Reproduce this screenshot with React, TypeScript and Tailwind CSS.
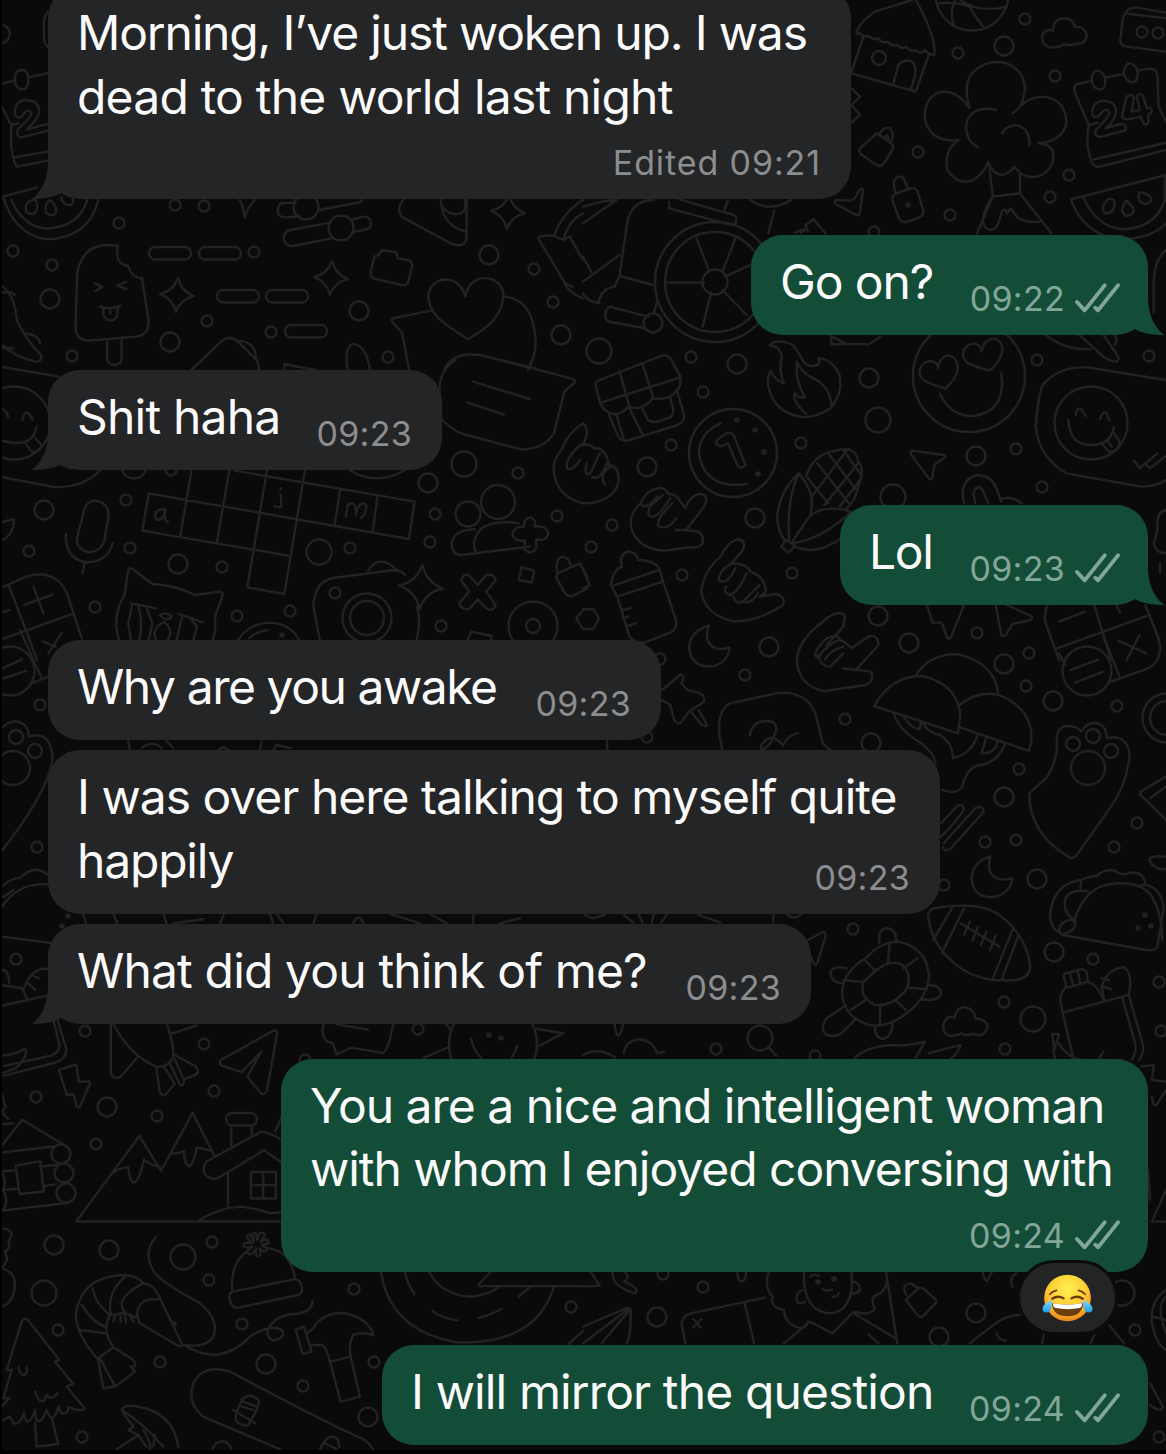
type Patch = { at: string; d: string[] };

// wallpaper line art, drawn patch by patch; each patch has its own origin and scale
const patches: Patch[] = [
  {
    at: "translate(0 0) scale(.3718 .3333)",
    d: [
      "M0 252 L38 242 M75 232 L128 220 M0 310 L30 375 V440 Q35 480 45 500 L128 482 M30 375 L50 370 M38 472 L128 455",
      "M58 210 q18 0 18 28 q0 30 -14 30 q-22 0 -22 -30 q0 -28 18 -28Z",
      "M40 345 Q38 300 72 300 Q107 303 105 338 Q100 360 72 388 L128 372 M40 345 Q50 362 62 345 Q72 322 85 338 Q85 350 50 385 Q40 410 58 412 L128 392",
      "M128 35 q-12 15-10 60 q0 40 10 45 M10 75 Q28 85 26 105 Q22 125 6 130",
      "M8 590 L100 562 M8 590 Q40 705 125 718 Q240 715 265 598 M30 598 Q60 680 125 686 Q215 680 235 598",
      "M95 598 q-30 5-25 35 q10 15 25 5 q10-20 0-40Z M135 600 q-20 15-10 40 q15 12 25 0 q5-20-15-40Z M165 590 q0 25 25 25 q10-5 5-20",
      "M318 738 Q240 722 215 790 Q207 810 207 840 L203 985 Q205 1020 240 1022 L365 1010 Q400 1005 400 965 L382 835 Q355 835 345 798 Q305 790 318 738Z",
      "M288 1022 V1075 Q290 1095 307 1095 Q327 1095 327 1075 V1016 M255 850 L275 860 L257 873 M340 845 L315 857 L340 867 M268 920 Q297 930 325 917 M278 924 V945 Q283 962 298 962 Q315 960 316 940 V922 M297 925 V940",
      "M645 600 Q655 620 658 652 Q665 625 685 600",
      "M975 600 Q970 606 962 608 L858 630 M795 608 L755 610 Q742 625 750 645 Q760 658 805 648",
      "M780 690 L888 668 M945 660 L975 650 Q995 648 998 668 Q998 685 985 688 L945 697 M890 715 L790 738 Q765 740 763 712 Q765 694 780 690",
      "M1085 600 Q1065 625 1080 650 L1215 732 Q1250 745 1255 715 V600 M1185 600 Q1190 680 1255 695 M1190 620 Q1210 650 1240 640 Q1258 625 1250 600",
      "M1007 770 L1018 765 L1028 750 L1065 757 L1070 775 L1095 780 Q1110 782 1108 800 L1098 845 Q1095 858 1080 855 L1005 835 Q995 830 997 815Z",
      "M1258 1018 C1210 980 1150 950 1152 885 C1160 825 1235 820 1252 890 C1262 815 1345 820 1354 880 C1354 950 1310 985 1258 1018Z",
      "M1160 932 L1065 953 Q1050 955 1055 965 L1082 1000 L1100 1110 M1355 890 Q1430 895 1440 1010 Q1445 1060 1420 1110 M1195 1110 Q1215 1055 1290 1065 L1440 1105",
      "M515 1110 L600 1020 Q620 1005 640 1025 L690 1080 Q697 1095 697 1110 M645 1022 Q690 1030 688 1075",
      "M765 1110 V1093 L850 1110 M935 1110 Q925 1040 950 1032 Q985 1035 995 1110",
      "M0 855 Q40 880 45 960 Q70 1020 110 1065 Q115 1085 95 1085 Q40 1070 0 1030 M0 880 Q30 870 40 885 M65 1000 Q105 1005 108 1030 M0 1045 H35",
      "M1490 710 Q1510 640 1568 600 M1515 720 Q1530 660 1568 640 M1450 720 Q1440 705 1490 707 L1515 720 L1535 708 M1450 720 L1520 850 L1540 860 M1535 715 L1568 780 M1520 855 Q1540 885 1568 895",
    ],
  },
  {
    at: "translate(583 0) scale(.3718 .3333)",
    d: [
      "M755 108 L720 222 M715 218 L895 275 L930 165 M835 250 L848 195 Q865 175 885 185 Q900 200 890 240 L882 268 M895 0 Q950 110 945 165 Q930 165 920 150 Q905 165 895 150 Q880 158 870 140 Q855 150 845 135 Q830 140 820 125 Q805 132 795 115 Q780 122 770 108 Q750 112 745 98 Q735 108 735 95 Q750 60 785 35 L885 0",
      "M998 80 Q985 40 1000 0 M1080 85 Q1060 60 1040 20 Q1010 5 955 10 M1015 0 Q1060 40 1140 20",
      "M1250 140 Q1230 130 1237 100 Q1250 85 1265 92 Q1265 55 1293 55 Q1320 55 1322 80 Q1350 80 1355 105 Q1350 135 1330 130 Q1305 140 1295 132 Q1275 148 1250 140Z",
      "M1568 38 L1490 23 Q1460 20 1452 55 L1445 120 Q1445 138 1465 140 L1568 155 M1458 40 L1568 55",
      "M1040 325 Q1020 250 1050 215 Q1090 175 1140 190 Q1200 220 1185 290 Q1180 325 1155 340 M1040 325 Q1000 260 950 280 Q910 310 922 370 Q945 430 1010 420 Q970 450 980 510 Q1010 560 1050 540 Q1080 520 1090 485 Q1100 520 1125 525 Q1150 520 1160 500 Q1190 545 1235 525 Q1275 495 1262 450 Q1250 430 1225 430 Q1290 425 1300 370 Q1300 300 1240 290 Q1200 290 1175 320",
      "M1110 330 Q1050 315 1032 365 Q1025 420 1062 442 M1127 400 Q1140 370 1175 378 Q1205 395 1200 437 M1092 490 L1102 590 L1060 700 M1175 520 V580 L1260 700 M1102 590 L1175 580 M1102 590 Q1060 660 1085 685 Q1110 700 1120 660 Q1130 610 1140 640 L1150 625 L1160 640 Q1175 670 1230 665",
      "M722 265 L745 290 L722 315 L745 345 L722 368",
      "M790 400 L745 445 Q740 455 750 465 L790 495 Q800 502 808 492 L832 450 Q838 440 828 430Z M797 405 Q805 380 825 385 Q840 400 828 428 M813 412 Q820 398 822 418",
      "M845 580 Q830 585 832 600 L850 655 Q855 668 870 666 L905 652 Q918 645 915 630 L900 575 Q895 562 880 565Z M840 578 L835 548 Q845 520 862 535 L875 568",
      "M680 600 Q672 610 685 615 L735 645 Q745 648 745 635 L753 570 Q750 562 742 572 Q730 605 715 602Z",
      "M585 700 L600 685 L605 695 L598 675 L620 658 L652 700 M570 698 L590 690",
      "M1370 242 L1330 252 Q1318 258 1322 275 L1360 375 Q1350 440 1370 490 Q1375 502 1390 500 L1568 450 M1408 232 L1455 222 M1490 212 L1525 206 Q1545 208 1545 230 L1548 320 L1568 365 M1360 375 L1385 368 M1375 478 L1568 428",
      "M1385 212 q18 5 20 30 q0 28-15 27 q-22-5-22-32 q2-25 17-25Z M1472 190 q18 5 20 30 q0 28-15 27 q-22-5-22-32 q2-25 17-25Z",
      "M1370 345 Q1368 305 1400 302 Q1440 305 1432 345 Q1425 370 1405 385 L1445 372 Q1465 372 1458 392 L1395 410 Q1375 412 1378 392 Q1420 345 1415 335 Q1405 320 1390 345 Q1378 358 1370 345Z M1462 290 L1450 345 Q1450 360 1465 358 L1500 350 L1508 372 Q1525 380 1520 345 Q1538 335 1525 322 L1517 325 L1505 285 Q1490 275 1490 295 L1498 330 L1475 335 L1482 295 Q1478 278 1462 290Z",
      "M1312 598 L1568 525 M1312 598 Q1350 710 1450 718 Q1530 715 1568 670 M1345 590 Q1380 680 1450 688 Q1540 685 1565 600 V530 M1410 600 Q1390 625 1405 640 Q1435 640 1428 600 Q1418 592 1410 600 M1462 602 Q1440 630 1460 648 Q1485 645 1480 625Z M1495 578 Q1490 610 1515 612 Q1535 605 1525 590 Q1510 575 1495 578",
      "M305 715 L340 815 M375 815 L410 715 M382 830 L460 790 M325 848 H225 M345 877 L322 980 M375 870 L440 945",
      "M232 605 V625 L400 675 Q415 675 412 650 L405 645 L260 598 M120 660 Q135 600 190 600 M120 660 L98 828 L190 855 M98 828 L85 860 Q50 865 42 905 M0 845 L98 765 M0 770 L22 815 M0 880 Q10 905 45 910 M80 922 L175 950 M62 930 Q55 960 70 965 L165 985 M75 920 Q65 922 62 935 M200 900 L190 940 M515 630 L498 700 M450 600 Q500 640 560 600 M380 630 L390 600 M0 620 Q60 600 90 600 L0 670",
      "M1568 750 Q1535 780 1535 850 V940 M668 1005 V1033 L770 1032 L800 1010 M670 1010 L710 1032",
    ],
  },
  {
    at: "translate(0 360) scale(.3718 .3333)",
    d: [
      "M0 20 L160 50 M0 350 L150 382 Q230 380 270 330 M0 145 Q18 150 22 170 M60 180 Q70 135 88 180 M0 240 Q90 270 98 200 M65 245 L85 275 Q105 280 112 255 L95 235",
      "M222 470 Q228 420 258 422 Q295 430 292 470 L280 545 Q270 575 240 577 Q205 570 207 535Z M177 522 Q175 600 235 607 Q290 605 303 550 M228 610 L222 640",
      "M0 490 Q20 480 37 478 Q40 520 5 542",
      "M630 332 L1115 425 L1100 537 L400 400 L383 512 L780 588 M515 332 L485 527 M617 332 L583 548 M718 332 L665 682 L765 702 L820 332 M915 388 L900 495 M1015 408 L1003 515",
      "M443 448 Q418 445 417 470 Q425 490 440 468 L445 448 Q438 480 452 487 M755 405 L757 438 Q752 446 738 438 M755 385 V388 M930 470 L935 435 Q955 420 957 450 V465 Q965 420 985 435 Q987 460 970 475",
      "M1225 0 Q1180 30 1182 100 M1190 180 Q1215 210 1245 222 L1400 268 Q1460 270 1490 220 L1518 95 L1545 68 Q1550 60 1535 55 L1345 0 M1272 65 L1425 117 M1257 128 L1355 163 M1430 0 L1425 15",
      "M1395 490 Q1330 478 1295 505 Q1265 540 1280 578 M1278 508 Q1220 510 1215 550 Q1215 585 1240 585 L1425 560 M1410 500 V485 Q1425 460 1440 485 L1438 500 Q1470 495 1475 520 Q1470 545 1442 538 V565 Q1425 590 1410 565 L1412 542 Q1380 545 1378 520 Q1385 498 1410 500",
      "M1240 660 Q1250 635 1265 650 L1285 675 L1305 648 Q1325 635 1333 660 L1308 695 L1333 735 Q1325 758 1308 745 L1285 718 L1262 748 Q1240 750 1235 730 L1262 695Z",
      "M1403 622 L1437 632 L1430 668 L1395 660Z M1500 640 Q1490 595 1515 590 Q1530 595 1535 615 M1497 655 Q1495 640 1510 635 L1560 610 L1580 650 M1497 655 L1520 700 Q1530 715 1545 705 L1580 685",
      "M1258 840 L1268 815 L1322 828 V840 M1568 750 L1550 775 L1568 808",
      "M860 840 L843 740 Q845 670 890 655 L1060 630 Q1080 632 1090 645 M1122 740 Q1133 790 1120 840 M990 632 Q1020 580 1065 628",
      "M320 840 Q300 770 335 705 L345 630 Q350 620 360 630 L410 672 Q470 675 525 705 L590 695 Q602 697 598 708 L578 770 Q582 810 572 840 M352 730 L420 745 M355 738 L345 790 L352 840 M372 740 Q385 780 375 840 M395 745 L410 790 L400 840 M430 765 Q445 755 462 768 Q450 790 430 765 M440 785 Q405 810 420 840 M440 785 Q470 810 450 840 M480 762 L545 787 M490 770 L475 840 M515 780 L530 800 L520 840",
      "M640 840 Q670 790 725 788 Q780 790 805 840 M670 835 Q690 815 720 810",
      "M0 685 L70 650 Q150 625 180 700 L220 835 M0 840 L195 762 M25 680 L100 900 M90 680 L117 760 M65 735 L140 705 M115 845 L150 860 M130 880 L165 820 M0 760 L25 750",
      "M940 330 Q1010 380 1090 330 M165 315 L190 325",
      "M1568 190 Q1530 215 1510 270 Q1485 300 1490 340 Q1500 410 1568 430 M1568 250 Q1520 290 1525 325 Q1540 335 1560 300",
    ],
  },
  {
    at: "translate(583 330) scale(.3718 .3333)",
    d: [
      "M975 175 C940 165 905 155 905 125 C910 85 955 85 955 115 C960 65 1005 65 1008 110 C1008 135 990 160 975 175Z M1093 122 C1060 110 1022 105 1022 72 C1025 35 1070 30 1072 65 C1078 15 1125 15 1128 55 C1128 85 1110 105 1093 122Z M960 192 Q990 260 1050 258 Q1140 245 1125 128",
      "M1568 150 L1375 115 Q1290 100 1240 160 Q1225 180 1218 290 Q1225 380 1300 430 L1500 470 Q1540 470 1568 450",
      "M1325 255 Q1330 215 1352 258 M1390 268 Q1405 225 1415 270 M1305 270 Q1310 345 1365 345 Q1420 345 1428 292 M1395 340 L1410 360 Q1425 375 1440 355 L1443 335 L1428 310 M1410 330 L1422 350 M1482 392 L1497 415 L1545 370 M1515 405 L1525 415 L1568 378",
      "M1240 10 Q1290 60 1365 58 M1430 45 Q1440 30 1430 15 M1330 10 L1400 80 Q1445 110 1440 80 L1400 15",
      "M45 150 Q30 155 35 170 L45 215 Q60 260 100 250 Q115 240 122 230 Q160 245 188 205 Q240 215 262 165 V140 L235 85 Q225 72 210 78Z M48 218 L262 142 M98 122 L125 230 M160 102 L190 205 M70 255 L95 320 Q105 335 120 332 L255 285 Q275 275 272 255 L255 190 M125 235 L162 318 M160 238 L175 270 Q185 278 200 275 L235 262 Q245 250 242 235 L235 205 M90 255 L110 330",
      "M503 45 Q520 25 560 42 Q575 55 590 90 Q605 115 630 105 Q640 95 632 85 Q670 85 690 135 Q700 190 665 235 Q620 270 575 258 Q510 240 498 165 Q495 140 505 122 Q515 150 540 160 Q525 120 535 80 Q530 50 503 45Z M600 252 Q560 210 570 190 Q580 205 597 203 Q570 150 575 95 Q590 130 620 145 Q665 170 668 225",
      "M370 280 Q310 310 312 375 Q330 480 442 462 M360 330 Q355 350 375 348 L390 340 L415 405 Q425 420 437 405 L405 315 Q395 300 375 318Z",
      "M600 440 Q620 370 680 362 Q735 345 740 395 Q760 420 740 470 Q735 510 705 540 M580 430 Q530 480 522 560 Q525 610 545 635 M580 430 Q545 520 555 630 M580 430 Q630 490 610 560 M722 545 Q640 520 605 565 L560 640 Q640 630 722 545 M570 650 Q630 680 700 620 M545 628 L533 650 L553 668 L570 648Z M605 445 L660 520 M630 400 L715 520 M660 370 L735 480 M700 360 L745 430 M615 500 L710 360 M650 525 L740 400 M690 530 L745 450",
      "M155 520 Q170 480 200 475 Q220 470 230 492 Q250 490 262 515 L275 535 Q290 490 320 492 Q340 500 325 530 L278 600 L310 605 Q325 615 322 640 Q315 655 290 652 L220 662 Q160 660 135 610 Q115 560 155 520 M155 520 Q165 545 200 500 M185 560 Q170 560 180 530 L215 495 M185 560 Q200 565 235 505 M205 590 Q195 580 215 550 L240 520 M205 590 Q230 600 250 565 M278 600 H250",
      "M415 628 Q440 630 430 660 L400 700 Q440 700 450 725 Q490 740 492 785 L475 800 L520 792 Q545 800 538 825 Q480 870 410 875 Q330 860 318 785 Q325 720 370 680 Q390 635 415 628 M400 700 Q365 720 365 750 Q385 770 410 715 M385 770 Q375 790 395 795 Q415 790 440 730 M405 800 Q410 825 430 815 L475 765 M425 815 Q455 825 470 790",
      "M0 280 Q20 300 0 345 M-5 345 Q20 340 30 355 Q60 350 70 405 Q100 410 95 460 Q75 520 0 520 M10 400 Q0 440 20 430 L45 370 M25 440 Q45 455 65 400 M60 465 Q40 430 75 410",
      "M105 710 Q95 675 120 665 Q145 665 148 690 Q190 690 205 715 L215 755 L92 800 L75 765 Q80 720 105 710 M80 768 L205 720 M92 800 L125 920 Q140 940 165 938 L235 908 Q255 895 250 870 L215 755 M107 840 L128 835 M107 865 L122 860 M115 890 L142 880",
      "M885 362 Q878 365 883 375 L930 445 Q937 452 940 440 L945 405 L970 385 Q978 378 970 375Z",
      "M1025 520 Q1010 450 1060 435 Q1095 435 1110 470 L1125 515 M1055 520 L1050 490 Q1060 460 1075 480 L1090 520 M1125 508 Q1150 495 1180 520",
      "M925 825 L940 878 H965 L980 925 Q990 930 992 915 L1025 825 M1110 825 L1125 915 Q1132 925 1140 910 L1155 882 L1205 870 Q1212 860 1200 855 L1140 825",
      "M1250 825 Q1240 850 1243 875 L1280 990 M1280 875 L1350 845 M1375 825 L1420 990 M1275 955 L1525 855 M1512 825 L1550 930 M1435 825 L1445 850",
      "M575 990 Q580 930 640 880 Q680 835 705 855 L700 890 L655 945 M0 838 H28 L43 865 L28 897 H0 M0 720 L18 765 L0 775",
      "M1568 540 Q1540 545 1545 600 L1535 640 Q1540 670 1568 670 M1552 700 V730",
    ],
  },
  {
    at: "translate(583 620) scale(.3718 .3333)",
    d: [
      "M575 120 Q580 200 650 213 L760 195 Q785 185 775 155 L700 145 M735 148 L795 75 Q795 45 770 48 L722 85 Q700 60 690 60 Q690 40 655 55 Q610 105 632 112 Q660 70 690 60 M632 108 Q640 140 665 140 L700 100 M650 120 Q665 90 700 80",
      "M338 17 C270 40 275 115 315 135 C355 150 390 125 395 82 C340 100 325 60 338 17Z M1095 710 C1030 730 1035 810 1075 828 C1110 840 1150 820 1155 775 C1100 790 1085 755 1095 710Z",
      "M1395 35 L1445 175 M1420 185 L1520 145 Q1560 120 1550 65 L1542 40 M1440 62 L1515 100 M1497 45 L1462 120 M1312 150 L1385 120 M1323 188 L1400 155 M1280 100 L1297 135",
      "M262 165 L212 210 M212 240 L235 255 L245 300 Q255 318 265 305 L285 275 L325 245 Q330 225 310 218 L280 210 L265 190 L270 175 Q268 160 258 165 M290 275 L320 315 Q335 325 332 310 L310 270",
      "M375 390 Q350 280 395 250 L520 220 Q600 210 625 280 L645 370 L665 390 M448 347 Q455 300 500 303 Q530 310 515 345 Q500 385 480 388 Q475 370 500 355 Q520 350 538 377 Q550 345 578 340 M65 362 V390",
      "M783 258 Q830 165 915 168 Q1010 195 1015 290 L1008 340Z M895 168 Q930 100 1010 103 Q1110 130 1117 225 M1010 258 Q1060 210 1120 225 Q1215 270 1205 370 L1200 393 L1015 322 M835 280 Q850 330 910 370 Q945 400 948 430 M860 285 Q880 325 905 328 L910 305 M915 310 Q930 340 960 345 Q995 370 995 415 Q1050 400 1062 340 M1085 350 Q1080 370 1072 400 Q1110 400 1115 365 M1135 372 Q1115 430 1060 437 Q1030 450 1020 500 Q1005 525 965 510",
      "M1275 370 Q1270 315 1310 318 Q1330 320 1340 335 Q1360 300 1390 312 Q1410 325 1408 355 Q1460 340 1470 400 Q1465 490 1420 560 L1325 710 Q1315 718 1305 710 Q1200 640 1200 520 L1245 475 Q1275 430 1275 370",
      "M1568 470 L1500 515 Q1495 522 1505 530 L1568 600 M1525 535 L1568 500 M1568 710 Q1525 705 1523 720 Q1535 750 1568 748",
      "M963 610 L1005 560 Q1020 548 1025 565 Q1020 585 963 650 M970 670 L1055 565 Q1075 555 1078 575 L990 685 Q970 698 968 680",
      "M1285 940 Q1250 920 1258 870 Q1270 790 1340 780 Q1370 765 1380 770 Q1400 745 1430 752 Q1455 770 1470 758 Q1510 755 1512 792 M1500 795 Q1550 790 1562 860 L1545 980 Q1535 995 1515 990 L1290 945 Q1275 940 1285 915 Q1310 890 1320 905 Q1350 800 1420 792 Q1500 780 1530 830 Q1558 880 1558 960 M1340 785 L1338 805 M1320 900 Q1285 870 1300 830 Q1320 805 1360 815 M1325 905 Q1325 935 1290 942",
      "M930 900 Q920 865 960 862 Q1070 845 1120 885 Q1195 950 1203 1040 Q1200 1075 1165 1080 Q1070 1090 1010 1040 Q940 980 930 900 M942 960 L995 860 M965 1000 L1025 865 M1100 1082 L1155 930 M1125 1082 L1170 950 M1015 910 L1120 980 M1040 905 L1025 945 M1062 920 L1048 960 M1085 935 L1070 975 M1110 945 L1095 990",
      "M760 1015 Q800 965 850 965 Q925 985 930 1065 Q930 1130 870 1180 Q820 1225 770 1215 Q695 1190 697 1110 Q705 1050 760 1015 M785 1055 Q825 1015 860 1035 Q890 1070 865 1115 Q830 1160 785 1155 Q740 1130 755 1085Z M825 968 L820 1028 M757 1018 L785 1052 M900 1015 L862 1045 M700 1080 L755 1087 M925 1108 L872 1103 M840 1140 L868 1170 M800 1158 L798 1215 M720 1170 L760 1140",
      "M797 970 V945 Q800 925 820 925 Q845 930 843 968 M700 1090 Q670 1090 665 1060 Q670 1035 710 1045 M928 1095 Q965 1095 962 1125 Q950 1145 912 1138 M785 1218 Q785 1255 808 1257 Q832 1250 833 1205 M708 1155 L655 1195 Q635 1225 655 1245 Q680 1255 700 1235 L735 1195",
      "M985 1247 Q965 1240 970 1210 Q980 1185 1000 1192 Q1005 1160 1030 1162 Q1055 1170 1055 1195 Q1090 1200 1088 1225 Q1075 1255 1050 1242 Q1025 1250 1018 1240 Q1000 1250 985 1247Z",
      "M1300 1100 L1293 1070 Q1290 1060 1305 1058 L1340 1048 Q1352 1048 1355 1060 L1358 1085 L1305 1102Z M1310 1060 L1318 1095 M1330 1052 L1338 1090 M1300 1100 Q1280 1120 1285 1150 L1290 1178 L1468 1125 Q1480 1060 1455 1042 Q1410 1045 1395 1100 L1402 1142 M1358 1085 Q1385 1095 1400 1140 M1290 1178 L1320 1320 M1450 1130 L1485 1270 Q1490 1300 1475 1320 M1468 1125 L1505 1270 Q1510 1300 1495 1320 M1395 1075 L1415 1080 M1400 1100 L1420 1108 M1262 1242 L1268 1290 L1280 1242Z M1265 1290 L1270 1320 M1280 1270 Q1300 1310 1340 1320 M1400 1295 L1385 1320",
      "M605 960 L645 937 Q655 935 652 950 L630 1030 Q625 1038 618 1028 L612 1005 M498 1280 L520 1308",
      "M85 1212 Q88 1245 95 1247 Q103 1240 108 1212 M110 1300 Q115 1260 155 1258 Q190 1265 200 1300 L220 1295 M0 1305 Q40 1280 85 1312 M730 1315 Q760 1280 830 1275 Q870 1280 920 1265 L895 1312 M930 1300 L1015 1275 Q1010 1300 990 1315",
      "M110 885 L135 908 M150 885 L160 908 M185 908 L190 885 M210 908 L225 885 M310 885 L370 908 M512 885 V908 M5 885 L25 895 L60 885",
    ],
  },
  {
    at: "translate(0 640) scale(.3333 .3333)",
    d: [
      "M8 85 L65 58 M10 115 L78 93 M60 -30 L125 115 M95 130 L145 110",
      "M0 270 Q25 240 55 245 Q85 255 88 290 Q150 270 158 350 Q150 450 0 640",
      "M5 740 Q40 710 60 715 Q100 670 145 705 M0 810 Q50 725 145 733 M0 775 Q15 770 40 750 M5 890 L160 910",
      "M385 303 L390 330 M425 325 Q455 298 485 325 M500 303 L520 325 M655 330 Q670 315 685 330 M785 303 L780 330 M820 330 L830 315 L875 325",
      "M250 822 L258 850 M340 822 L352 850 M490 822 L500 850 M520 850 L610 838 M660 850 L672 822 M810 822 L820 850 M830 822 L850 848",
      "M940 850 L950 822 M1060 850 Q1075 815 1090 850 M1170 822 L1260 850 M1290 822 L1340 850 M1420 822 V850 M1500 850 L1560 835",
    ],
  },
  {
    at: "translate(0 900) scale(.3718 .3533)",
    d: [
      "M0 300 L130 270 M5 200 Q20 190 25 235 M0 240 L60 250 L75 285 M65 250 Q85 190 128 195 M90 215 L105 222 M75 235 L95 255",
      "M155 340 L178 420 Q180 450 150 460 L0 500 M145 345 L160 410 Q160 430 140 440 L10 470 M5 440 Q40 440 65 422 Q80 430 50 470 Q20 490 0 490",
      "M160 487 Q155 480 165 478 L200 467 Q207 467 207 475 L212 515 L240 513 Q245 520 238 528 L215 585 Q208 592 205 580 L198 550 L180 552Z",
      "M298 350 V490 Q305 510 325 500 L372 442 M305 352 Q350 440 420 472 Q455 475 465 445 Q470 420 450 352 M460 378 L530 355 M420 472 L430 545 Q440 560 450 545 L470 520 L440 470 M455 458 L485 525 Q495 525 495 510 L470 450 M472 440 L525 470 Q540 485 525 495 L495 508",
      "M595 452 L735 370 Q747 367 745 380 L718 540 Q710 555 700 545 L665 500 L702 430 L650 487 L595 468 Q588 460 595 452Z",
      "M870 352 Q860 400 895 405 L905 437 L945 418 L1030 433 Q1045 425 1057 352 M905 352 L990 367",
      "M1267 392 Q1275 430 1295 447 M1390 413 Q1385 435 1375 447 M1200 352 L1215 372 M1445 365 L1515 377 L1450 413 M1140 447 L1205 417",
      "M0 715 L150 697 M5 695 L60 622 L170 692 M0 635 L35 632 M5 768 L40 765 M108 755 L150 750 M0 822 L48 817 M118 810 L150 805 M0 880 L185 857 M42 752 L108 740 L118 825 L52 832Z M5 770 Q20 800 8 820 M10 825 Q25 855 8 878 M5 550 L15 585 L5 600 L22 620",
      "M757 910 H205 L375 668 L433 767 L518 602 L577 725 M300 775 Q325 755 345 757 Q348 795 360 800 Q375 795 387 735 Q410 755 430 755 M465 718 Q490 715 495 710 Q495 750 510 755 Q520 745 530 700 Q550 705 570 710 M535 907 Q590 870 650 868 Q700 875 725 887 L757 884",
      "M555 740 L700 657 Q715 652 757 678 M555 740 Q540 765 555 780 Q570 795 590 785 L710 708 L757 742 M613 775 V868 M622 695 V645 M677 645 V662 M740 655 L757 615 M675 770 H742 V845 H675Z M708 770 V845 M675 807 H742",
      "M1025 1055 Q1050 1220 1230 1252 Q1440 1260 1490 1095 M1090 1055 Q1095 1085 1115 1115 M1155 1055 Q1190 1120 1270 1123 Q1320 1115 1338 1098 M1163 1163 Q1190 1185 1230 1190 M1287 1183 Q1320 1175 1350 1157 M1395 1123 L1422 1098 M1318 1055 L1287 1088 Q1285 1095 1300 1093 H1568 M1530 1256 L1568 1220",
    ],
  },
  {
    at: "translate(0 1180) scale(.3333 .3333)",
    d: [
      "M0 145 Q35 145 35 165 L25 185 Q35 205 15 215 L22 240 L5 265 Q45 275 45 315 Q40 370 5 380",
      "M20 570 L65 425 Q75 408 88 425 L178 540 L165 545 L220 612 L200 620 L250 680 Q260 692 240 690 Q220 690 205 680 Q205 705 185 700 Q175 680 175 680 Q165 720 150 712 Q145 700 140 690 Q125 730 110 722 Q105 705 105 690 Q95 725 80 725 Q72 710 72 700 Q60 735 40 730 Q35 715 30 710 L0 725 M20 570 L35 570 L10 655 L28 655 L5 680 M55 560 Q60 590 75 583 Q85 575 80 562 M105 635 Q115 665 130 665 Q140 650 140 645 Q155 665 172 640 M105 730 L110 800 L175 792 L155 715",
      "M310 625 L295 540 Q225 460 228 400 Q240 320 310 295 Q400 270 430 310 Q460 312 475 345 L545 490 Q550 500 535 498 L420 430 Q400 390 430 365 Q450 355 475 358 M430 310 Q370 340 365 370 Q365 400 390 405 Q400 412 415 412 M375 290 Q330 330 330 380 Q330 410 345 405 Q365 395 390 405 M278 325 Q285 370 330 405 M245 375 Q280 430 320 442 M240 450 L320 460 M330 405 Q310 440 325 475 L340 502 L295 535 M340 502 L400 540 Q408 550 405 558 L392 560 L405 575 L345 620 L310 625 M300 535 L345 618 M345 410 L340 425 M362 408 V425 M375 408 L378 428 M390 408 L400 425",
      "M467 172 Q425 220 465 280 Q490 310 600 370 Q660 420 640 470 Q620 505 550 495 Q600 525 650 525 Q710 515 750 470 Q810 430 845 450 Q860 475 820 482 Q795 470 805 445 Q830 405 880 402 Q935 400 938 362",
      "M697 330 Q690 250 740 215 M805 205 Q870 210 885 295 M697 335 L880 298 Q900 295 905 320 Q910 340 895 345 L715 383 Q695 385 690 360 Q685 340 697 335",
      "M762 185 L750 162 Q738 165 745 178 L755 190 L735 188 Q725 200 740 203 L757 200 L742 215 Q745 228 758 220 L768 205 V225 Q778 235 782 222 L778 205 L792 215 Q805 210 798 202 L785 195 L805 190 Q808 178 795 178 L782 185 L795 165 Q788 152 778 162 L772 180 L768 160 Q758 155 760 168Z",
      "M887 450 L912 440 L935 515 L908 522Z M920 460 Q940 450 945 435 Q990 385 1055 405 Q1110 425 1120 465 Q1085 455 1060 465 Q1045 490 1052 530 L990 545 Q980 500 965 495 L930 495 M990 545 L1022 665 L1080 650 L1052 530",
      "M840 808 L610 710 Q560 670 580 610 Q610 550 690 575 Q1000 740 1085 775 Q1110 790 1120 810 M725 660 Q750 635 775 660 Q780 670 765 700 L745 735 Q735 742 710 725 Q700 715 725 660 M700 690 L765 730 M725 680 L760 690 M730 665 L770 680 M960 810 Q985 750 1015 780 L1018 800 M975 790 L1010 808",
      "M365 690 Q370 675 405 678 Q520 695 535 800 M365 690 Q430 730 490 800 M370 700 L400 740 L385 750 L415 765 L350 808 M415 765 Q430 790 440 800 M430 750 Q455 790 450 808 M465 765 L460 800",
    ],
  },
  {
    at: "translate(583 1000) scale(.3718 .3333)",
    d: [
      "M0 860 L45 857 L20 815 M80 815 Q75 860 140 880 Q155 865 110 845 Q130 830 110 815 M415 815 Q415 845 427 845 Q440 840 438 815",
      "M0 980 L115 925 Q130 922 128 935 Q130 1000 118 1030 M0 1030 L125 925 M50 1030 L125 930",
      "M275 1030 L265 970 Q270 945 290 940 L490 893 M435 910 L460 1030 M297 957 L317 983 M318 957 L297 983",
      "M500 815 Q485 860 510 890 Q500 920 540 930 Q545 980 590 985 Q605 975 605 965 M595 815 Q590 890 625 925 Q665 955 700 925 Q730 890 722 815 M590 870 Q570 880 575 905 Q585 915 597 905 M722 845 Q745 845 745 870 Q735 885 720 878 M730 935 Q770 950 785 925 Q770 890 790 885 Q825 870 815 815 L845 1030 M540 1030 L610 965 L670 1000 L725 938 L840 1015 M768 1003 L795 1030 M612 830 Q620 820 635 828 M645 868 Q655 875 670 868 M672 890 Q685 890 688 880",
      "M905 862 L868 900 L900 945 Q908 955 915 948 L948 910 Q952 900 945 895 L915 865Z M870 885 Q855 855 878 850 Q895 855 900 868",
      "M1040 1030 L1110 970 Q1140 945 1175 945 M1113 1000 Q1120 1025 1137 1020 M1235 1030 L1240 1000 M1365 1030 L1375 1005 M1415 975 L1455 1030 M1155 860 Q1145 835 1165 820 M1075 815 Q1080 845 1087 842 L1100 815",
      "M1568 870 Q1525 900 1530 970 Q1540 1030 1568 1050 M1568 890 Q1540 920 1568 1000 M1532 950 L1568 960",
      "M1500 200 L1535 195 L1530 240 L1568 245 M1530 290 Q1535 330 1545 310 L1568 270 M1568 570 L1530 665 H1568 M1520 510 L1525 600 M1525 1150 L1560 1220 Q1555 1240 1525 1215",
    ],
  },
];

const rings: Record<string, number[][]> = {
  "5.5": [
    [175, 205], [204, 206], [119, 223], [13, 251], [52, 265], [254, 252], [207, 321], [72, 356], [271, 332], [534, 269],
    [553, 302], [388, 357], [1025, 19], [958, 53], [1055, 76], [918, 152], [1069, 175], [1050, 197], [950, 215], [874, 232],
    [1142, 32], [1158, 33], [691, 357], [1037, 360], [1149, 356], [703, 392], [671, 445], [801, 443], [1016, 449], [1042, 487],
    [612, 525], [591, 547], [682, 575], [792, 573], [977, 633], [1029, 653], [126, 500], [29, 551], [130, 548], [222, 567],
    [95, 607], [237, 616], [290, 611], [350, 548], [518, 473], [435, 514], [430, 542], [557, 516], [441, 626], [171, 470],
    [745, 675], [845, 719], [1026, 686], [1117, 706], [1019, 769], [1137, 823], [1114, 847], [1016, 840], [985, 842], [944, 885],
    [853, 929], [1093, 959], [1159, 982], [1004, 1002], [1161, 1031], [1005, 1049], [716, 1049], [815, 1056], [647, 737], [660, 659],
    [16, 959], [85, 1031], [204, 1044], [214, 1091], [36, 1097], [157, 1116], [96, 1144], [418, 1029], [305, 1060], [212, 1242],
    [209, 1280], [58, 1330], [242, 1324], [160, 1362], [303, 1386], [374, 1362], [82, 1437], [354, 1289], [571, 1307], [703, 1287],
    [663, 1274], [1135, 1330], [1159, 1437], [40, 705], [37, 847], [335, 593],
  ],
  "7": [[1073, 744], [1093, 736], [1111, 751], [16, 737], [35, 751], [533, 626], [879, 58]],
  "9.5": [
    [50, 299], [170, 342], [359, 311], [489, 255], [561, 335], [1004, 46], [737, 364], [869, 378], [647, 467], [976, 456],
    [755, 518], [878, 616], [909, 643], [769, 647], [44, 510], [178, 564], [428, 483], [871, 743], [1004, 664], [1053, 701],
    [1004, 797], [1037, 879], [1054, 952], [794, 908], [107, 1107], [54, 1245], [109, 1250], [266, 1364], [368, 1417], [222, 1451],
    [657, 1317], [976, 1313], [939, 1337], [61, 1154], [64, 1173], [66, 1193], [653, 323],
  ],
  "12.5": [
    [599, 351], [878, 420], [893, 497], [319, 552], [464, 464], [134, 466], [1033, 1019], [183, 1257], [44, 1293], [1122, 1293],
    [306, 207], [341, 228], [468, 514], [760, 1038], [715, 282],
  ],
  "17": [[498, 502], [367, 618], [1088, 768], [13, 768], [1167, 718]],
  "24.5": [[533, 626], [367, 618], [1087, 671], [10, 671], [1167, 718]],
  "36.5": [[972, -6], [1091, 423], [14, 423]],
  "44": [[733, 453], [493, 1044]],
  "50": [[715, 282]],
  "56": [[969, 376]],
  "60": [[715, 282]],
};

const dots = [
  [908, 205], [737, 420], [755, 430], [764, 452], [758, 474], [1145, 915], [1151, 926], [1138, 928], [68, 916], [62, 926],
  [282, 635], [489, 1035], [501, 1038], [174, 1324], [818, 1282], [834, 1279],
];

const pills = [
  [149, 247, 42], [199, 247, 42], [217, 290, 42], [266, 290, 42], [285, 325, 42], [226, 1113, 31],
];

const stars = [
  [331, 278, 17], [177, 295, 17], [508, 212, 17], [421, 587, 22],
];

function Wallpaper() {
  return (
    <svg
      className="absolute inset-0 [&_path]:[vector-effect:non-scaling-stroke]"
      width="1166"
      height="1450"
      viewBox="0 0 1166 1450"
      fill="none"
      stroke="#222222"
      strokeWidth="2.4"
      strokeLinecap="round"
      strokeLinejoin="round"
      aria-hidden="true"
    >
      {patches.map((patch) => (
        <g key={patch.at} transform={patch.at}>
          {patch.d.map((d) => (
            <path key={d} d={d} />
          ))}
        </g>
      ))}
      {Object.entries(rings).map(([r, list]) =>
        list.map(([x, y]) => <circle key={`${r}-${x}-${y}`} cx={x} cy={y} r={r} />)
      )}
      {dots.map(([x, y]) => (
        <circle key={`${x}-${y}`} cx={x} cy={y} r="1.6" />
      ))}
      {pills.map(([x, y, w]) => (
        <rect key={`${x}-${y}`} x={x} y={y} width={w} height="12.5" rx="6" />
      ))}
      {stars.map(([x, y, s]) => (
        <path
          key={`${x}-${y}`}
          transform={`translate(${x} ${y}) rotate(4) scale(${s})`}
          d="M0 -1 Q.2 -.25 1 0 Q.25 .2 0 1 Q-.2 .25 -1 0 Q-.25 -.2 0 -1Z"
        />
      ))}
      <path d="M1 0 V1450" stroke="#000" strokeWidth="2" />
    </svg>
  );
}

function Ticks() {
  return (
    <svg
      className="mb-[6px] ml-[10px] h-[30px] w-[45px]"
      viewBox="0 0 135 90"
      fill="none"
      stroke="#82a698"
      strokeWidth="11.5"
      strokeLinecap="round"
      strokeLinejoin="round"
      aria-label="Delivered"
    >
      <path d="M6 57 L29 82 L89 7" />
      <path d="M61 74 L69 82 L129 7" />
    </svg>
  );
}

function Tail({ mine }: { mine?: boolean }) {
  return (
    <svg
      className={
        mine
          ? "absolute bottom-0 right-[-16px] h-[50px] w-[50px] text-[#144d37]"
          : "absolute bottom-0 left-[-16px] h-[50px] w-[50px] -scale-x-100 text-[#242527]"
      }
      viewBox="0 0 50 50"
      fill="currentColor"
      aria-hidden="true"
    >
      <path d="M34 12 C34 28 39 41 50 50 C40 50 28 48.500 20 43.500 L8 28 Z" />
    </svg>
  );
}

function Joy() {
  return (
    <svg className="h-[48px] w-[51px]" viewBox="0 0 152 144" role="img" aria-label="😂">
      <defs>
        <radialGradient id="face" cx=".5" cy=".3" r=".72">
          <stop offset="0" stopColor="#fff04f" />
          <stop offset=".5" stopColor="#fdd037" />
          <stop offset=".8" stopColor="#f8a825" />
          <stop offset="1" stopColor="#e87a1c" />
        </radialGradient>
        <linearGradient id="tear" x1="0" y1="0" x2="0" y2="1">
          <stop offset="0" stopColor="#8fe0fb" />
          <stop offset="1" stopColor="#199be6" />
        </linearGradient>
      </defs>
      <circle cx="76" cy="72" r="70" fill="url(#face)" />
      <g fill="none" stroke="#6d3c10" strokeWidth="5" strokeLinecap="round">
        <path d="M23 61 Q30 52 43 49" />
        <path d="M129 61 Q122 52 109 49" />
        <path d="M30 74 Q47 63 64 73" strokeWidth="7" />
        <path d="M122 74 Q105 63 88 73" strokeWidth="7" />
      </g>
      <path d="M29 88 Q76 96 123 88 Q120 127 76 127 Q32 127 29 88Z" fill="#6b3d0f" />
      <path d="M32 88 Q76 96 120 88 Q120 100 112 102 Q76 109 40 102 Q32 100 32 88Z" fill="#fff" />
      <path d="M28 76 Q32 101 22 112 Q10 120 2 110 Q-2 97 12 88 Q22 83 28 76Z" fill="url(#tear)" />
      <path d="M124 76 Q120 101 130 112 Q142 120 150 110 Q154 97 140 88 Q130 83 124 76Z" fill="url(#tear)" />
    </svg>
  );
}

type Line = [text: string, tracking: string];

type MessageProps = {
  lines: Line[];
  time: string;
  size: string;
  mine?: boolean;
  tail?: boolean;
  timeBelow?: boolean;
  reaction?: boolean;
};

function Message({ lines, time, size, mine, tail, timeBelow, reaction }: MessageProps) {
  const meta = (
    <div
      className={`mb-[-2.5px] flex items-end text-[34px] leading-[40px] ${
        mine ? "text-[#82a698]" : "text-[#8c8d8f]"
      } ${time.length > 5 ? "tracking-[0.9px]" : "tracking-[0.3px]"}`}
    >
      <span>{time}</span>
      {mine && <Ticks />}
    </div>
  );

  return (
    <div
      className={`relative rounded-[32px] pb-[18.5px] pt-[18px] pl-[30px] ${size} ${
        mine ? "self-end bg-[#144d37] pr-[28px]" : "self-start bg-[#242527] pr-[30px]"
      }`}
    >
      {tail && <Tail mine={mine} />}
      {lines.map(([text, tracking], i) => (
        <div key={text} className="relative flex h-[63.5px] items-end justify-between whitespace-nowrap">
          <p className={`-ml-px mb-[3px] text-[48px] leading-[63.5px] text-[#fafafa] ${tracking}`}>{text}</p>
          {!timeBelow && i === lines.length - 1 && meta}
        </div>
      ))}
      {timeBelow && <div className="relative flex h-[49.5px] items-end justify-end">{meta}</div>}
      {reaction && (
        <div className="absolute right-[30px] top-[201.5px] flex h-[75px] w-[101px] items-center justify-center rounded-full border-[3px] border-[#0a0c0b] bg-[#232424]">
          <Joy />
        </div>
      )}
    </div>
  );
}

export default function App() {
  return (
    <main className="relative h-[1454px] w-[1166px] overflow-hidden bg-[#0a0a0a] font-['Inter','Liberation_Sans',sans-serif]">
      <Wallpaper />
      <div className="relative -mt-[14px] flex flex-col pl-[48px] pr-[18px]">
        <Message
          size="w-[803px]"
          tail
          timeBelow
          time="Edited 09:21"
          lines={[
            ["Morning, I’ve just woken up. I was", "tracking-[-1.17px]"],
            ["dead to the world last night", "tracking-[-0.8px]"],
          ]}
        />
        <div className="mt-[35.5px] flex flex-col">
          <Message size="w-[397px]" mine tail time="09:22" lines={[["Go on?", "tracking-[-1.1px]"]]} />
        </div>
        <div className="mt-[35px] flex flex-col">
          <Message size="w-[394px]" tail time="09:23" lines={[["Shit haha", "tracking-[-0.8px]"]]} />
        </div>
        <div className="mt-[35px] flex flex-col">
          <Message size="w-[308px]" mine tail time="09:23" lines={[["Lol", "tracking-[-1.3px]"]]} />
        </div>
        <div className="mt-[35.5px] flex flex-col gap-[10px]">
          <Message size="w-[613px]" time="09:23" lines={[["Why are you awake", "tracking-[-1.45px]"]]} />
          <Message
            size="w-[892px]"
            time="09:23"
            lines={[
              ["I was over here talking to myself quite", "tracking-[-1px]"],
              ["happily", "tracking-[-1.2px]"],
            ]}
          />
          <Message size="w-[763px]" tail time="09:23" lines={[["What did you think of me?", "tracking-[-0.85px]"]]} />
        </div>
        <div className="mt-[35px] flex flex-col gap-[73.5px]">
          <Message
            size="w-[867px]"
            mine
            timeBelow
            reaction
            time="09:24"
            lines={[
              ["You are a nice and intelligent woman", "tracking-[-1px]"],
              ["with whom I enjoyed conversing with", "tracking-[-1.03px]"],
            ]}
          />
          <Message size="w-[766px]" mine time="09:24" lines={[["I will mirror the question", "tracking-[-0.88px]"]]} />
        </div>
      </div>
      <div className="absolute inset-x-0 bottom-0 h-[4px] bg-black" />
    </main>
  );
}
